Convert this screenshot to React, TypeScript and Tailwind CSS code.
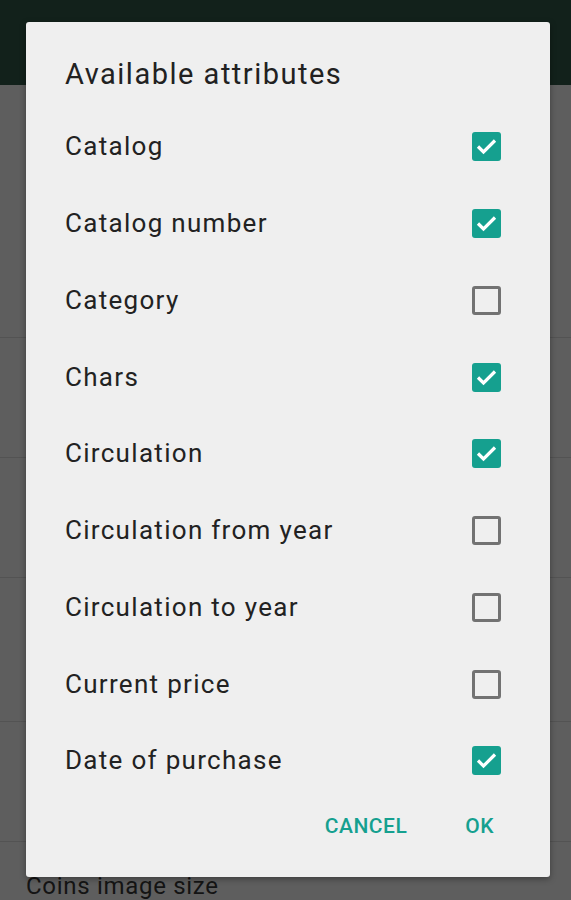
const ATTRIBUTES: { label: string; checked: boolean }[] = [
  { label: "Catalog", checked: true },
  { label: "Catalog number", checked: true },
  { label: "Category", checked: false },
  { label: "Chars", checked: true },
  { label: "Circulation", checked: true },
  { label: "Circulation from year", checked: false },
  { label: "Circulation to year", checked: false },
  { label: "Current price", checked: false },
  { label: "Date of purchase", checked: true },
]

// background list rows (dimmed by the dialog overlay)
const BG_ROWS = [253, 120, 120, 144, 120]

function Checkbox({ checked }: { checked: boolean }) {
  if (checked) {
    return (
      <span className="flex h-[29px] w-[29px] items-center justify-center rounded-[3px] bg-[#15a08f]">
        <svg width="29" height="29" viewBox="0 0 29 29" fill="none">
          <path d="M6 14.5l5.5 5.5L23 8.5" stroke="#ffffff" strokeWidth="3.2" />
        </svg>
      </span>
    )
  }
  return <span className="block h-[29px] w-[29px] rounded-[3px] border-[3px] border-[#727272]" />
}

export default function App() {
  return (
    <div className="relative h-[900px] w-[571px] overflow-hidden bg-[#5e5e5e] font-['Roboto',sans-serif]">
      <div className="h-[85px] bg-[#12211b]" />
      {BG_ROWS.map((h, i) => (
        <div key={i} style={{ height: h }} className="border-b border-[#535353]" />
      ))}
      <div className="px-[26px] pt-[29px] text-[24px] leading-[30px] tracking-[0.7px] text-[#141414]">Coins image size</div>

      <div className="absolute left-[26px] top-[22px] flex h-[855px] w-[524px] flex-col rounded-[3px] bg-[#efefef] shadow-[0_2px_6px_rgba(0,0,0,0.35)]">
        <div className="h-[86.6px] pl-[39px] pt-[36px] text-[29px] leading-[32px] tracking-[1.5px] text-[#212121]">
          Available attributes
        </div>
        {ATTRIBUTES.map((a) => (
          <div key={a.label} className="flex h-[76.75px] items-center justify-between pl-[39px] pr-[49px]">
            <span className="text-[26px] tracking-[1.3px] text-[#222222]">{a.label}</span>
            <Checkbox checked={a.checked} />
          </div>
        ))}
        <div className="flex items-center justify-end gap-[58px] pr-[56px] pt-[12px]">
          <span className="text-[21px] font-medium tracking-[0.5px] text-[#15a08f]">CANCEL</span>
          <span className="text-[21px] font-medium tracking-[0.5px] text-[#15a08f]">OK</span>
        </div>
      </div>
    </div>
  )
}
